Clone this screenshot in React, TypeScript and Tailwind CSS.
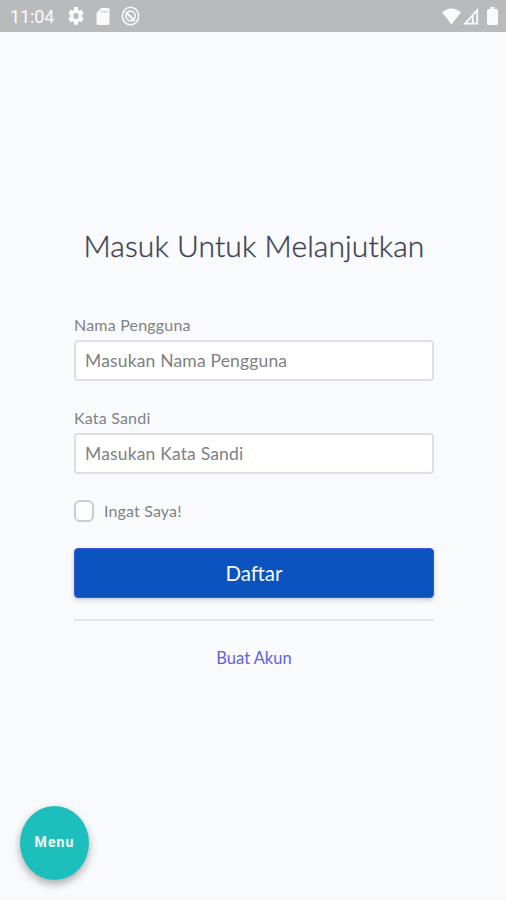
import type { ReactNode } from 'react';

function StatusBar() {
  return (
    <header className="flex h-8 shrink-0 items-center bg-[#b9babc] text-[#fafafa]">
      <span className="ml-[10px] w-[58px] pt-0.5 font-[Roboto,sans-serif] text-[18px] leading-5 tracking-[-0.1px]">11:04</span>
      <svg className="h-[18px] w-4" viewBox="2 2 20 20" preserveAspectRatio="none" fill="currentColor">
        <path d="M19.14 12.94c.04-.3.06-.61.06-.94 0-.32-.02-.64-.07-.94l2.03-1.58a.49.49 0 0 0 .12-.61l-1.92-3.32a.49.49 0 0 0-.59-.22l-2.39.96a7 7 0 0 0-1.62-.94l-.36-2.54A.48.48 0 0 0 13.92 2h-3.84a.48.48 0 0 0-.47.41l-.36 2.54c-.59.24-1.13.57-1.62.94l-2.39-.96a.48.48 0 0 0-.59.22L2.74 8.87a.48.48 0 0 0 .12.61l2.03 1.58a7 7 0 0 0 0 1.88l-2.03 1.58a.49.49 0 0 0-.12.61l1.92 3.32c.12.22.37.29.59.22l2.39-.96c.5.38 1.03.7 1.62.94l.36 2.54c.05.24.24.41.48.41h3.84c.24 0 .44-.17.47-.41l.36-2.54c.59-.24 1.13-.56 1.62-.94l2.39.96c.22.08.47 0 .59-.22l1.92-3.32a.48.48 0 0 0-.12-.61zM12 15.3A3.3 3.3 0 1 1 12 8.7a3.3 3.3 0 0 1 0 6.6z" />
      </svg>
      <svg className="ml-3 h-[17px] w-[14px]" viewBox="0 0 14 17" fill="currentColor">
        <path fillRule="evenodd" d="M5.3 0H12q1.5 0 1.5 1.6v13.6q0 1.8-1.7 1.8H2.2Q.5 17 .5 15.2V5zM5.3 2.8V4.4h1.2V2.8zm2.4 0V4.4h1.2V2.8zm2.4 0V4.4h1.2V2.8z" />
      </svg>
      <svg className="ml-[11px] h-5 w-[19px]" viewBox="0 0 19 20" fill="none" stroke="currentColor">
        <ellipse cx="9.5" cy="10" rx="8.2" ry="8.8" strokeWidth="1.6" />
        <ellipse cx="9.5" cy="10" rx="4.6" ry="4.9" strokeWidth="1.6" />
        <path d="M4.8 6l9 9" strokeWidth="2" />
      </svg>
      <div className="ml-auto mr-2 flex items-center">
        <svg className="h-[17px] w-[19px]" viewBox="0 0 19 17" fill="currentColor">
          <path d="M0 4.3Q9.5-3.5 19 4.3L9.5 16.5z" />
        </svg>
        <svg className="ml-[2px] h-[17px] w-4" viewBox="0 0 16 17" fill="none" stroke="currentColor">
          <path d="M2 15.7L14.2 2.2V15.7z" strokeWidth="1.8" />
          <path d="M9.7 7.5V15.7" strokeWidth="1.8" />
        </svg>
        <svg className="ml-[8px] h-[18px] w-[11px]" viewBox="0 0 11 18" fill="currentColor">
          <path d="M3.4 0h4.2v2H9.5Q11 2 11 3.5v13Q11 18 9.5 18h-8Q0 18 0 16.5v-13Q0 2 1.5 2h1.9z" />
        </svg>
      </div>
    </header>
  );
}

function Field({ label, placeholder }: { label: ReactNode; placeholder: string }) {
  return (
    <label className="block">
      <span className="block h-[25px] text-[16px] leading-5 tracking-[0.2px] text-[#808286]">{label}</span>
      <input
        placeholder={placeholder}
        className="block h-[41px] w-full rounded-[4px] border-2 border-[#dddeea] bg-white px-[9px] text-[17.5px] tracking-[0.17px] text-[#6d6d70] outline-none placeholder:text-[#808083]"
      />
    </label>
  );
}

export default function App() {
  return (
    <div className="relative flex h-[900px] w-[506px] flex-col overflow-hidden bg-[#f8fafc] font-[Lato,sans-serif]">
      <StatusBar />
      <main className="ml-[74px] mt-[193px] w-[360px]">
        <h1 className="whitespace-nowrap text-center text-[30px] font-light leading-10 tracking-[0.1px] text-[#3c3f51] [-webkit-text-stroke:0.35px_#3c3f51]">Masuk Untuk Melanjutkan</h1>
        <form className="mt-[50px]">
          <Field label="Nama Pengguna" placeholder="Masukan Nama Pengguna" />
          <div className="h-[27px]" />
          <Field label="Kata Sandi" placeholder="Masukan Kata Sandi" />
          <label className="mt-[26px] flex h-[22px] items-center">
            <input type="checkbox" className="h-[22px] w-5 appearance-none rounded-[6px] border-2 border-[#cbccd0] bg-[#fcfdfe]" />
            <span className="ml-[10px] text-[16px] leading-5 tracking-[0.15px] text-[#808286]">Ingat Saya!</span>
          </label>
          <button type="button" className="mt-[26px] block h-[50px] w-full rounded-[4px] border border-[#3a58d8] bg-[#0a52be] text-[20.5px] leading-6 text-[#f4f7fd] shadow-[0_2px_4px_rgba(50,60,90,0.25)]">
            Daftar
          </button>
        </form>
        <hr className="mt-[21px] border-t-2 border-[#e3e4e7]" />
        <a className="mt-[27px] block text-center text-[16.5px] leading-5 text-[#5c63dc]">Buat Akun</a>
      </main>
      <button type="button" className="absolute left-5 top-[806px] h-[74px] w-[69px] rounded-[50%] bg-[#1dbfbc] pb-0.5 font-[Roboto,sans-serif] text-[14px] font-bold tracking-[1.1px] text-[#eefcfb] shadow-[0_4px_8px_rgba(0,0,0,0.32)]">
        Menu
      </button>
    </div>
  );
}
